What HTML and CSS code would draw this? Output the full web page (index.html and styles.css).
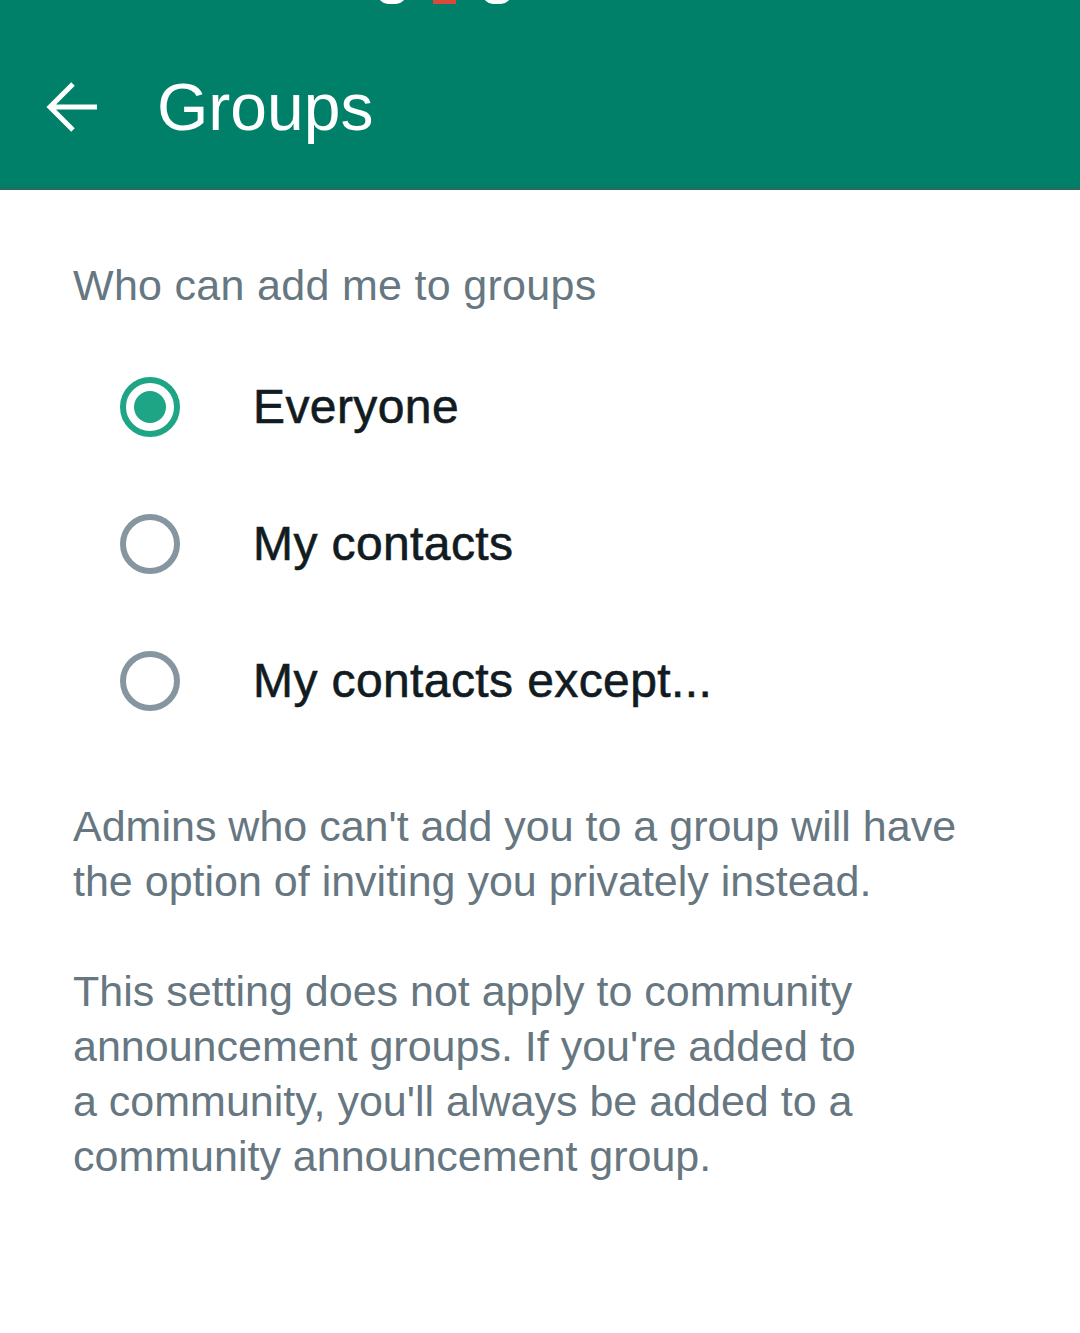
FILE: index.html
```html
<!DOCTYPE html>
<html lang="en">
<head>
    <meta charset="UTF-8">
    <meta name="viewport" content="width=device-width, initial-scale=1.0">
    <title>Groups</title>
    <link rel="stylesheet" href="styles.css">
</head>
<body>
    <header class="app-bar">
        <div class="status-bits">
            <span class="bit"></span><span class="bit red"></span><span class="bit"></span>
        </div>
        <div class="bar-row">
            <button class="back" aria-label="Back">
                <svg width="56" height="56" viewBox="0 0 56 56"><path d="M52 28H6M28 5L5 28l23 23" fill="none" stroke="#fff" stroke-width="5"/></svg>
            </button>
            <h1>Groups</h1>
        </div>
    </header>

    <main class="content">
        <h2 class="section-title">Who can add me to groups</h2>

        <div class="options">
            <label class="option">
                <input type="radio" name="who" checked>
                <span class="radio"></span>
                <span class="option-label">Everyone</span>
            </label>
            <label class="option">
                <input type="radio" name="who">
                <span class="radio"></span>
                <span class="option-label">My contacts</span>
            </label>
            <label class="option">
                <input type="radio" name="who">
                <span class="radio"></span>
                <span class="option-label">My contacts except...</span>
            </label>
        </div>

        <p class="note">Admins who can't add you to a group will have<br>the option of inviting you privately instead.</p>
        <p class="note">This setting does not apply to community<br>announcement groups. If you're added to<br>a community, you'll always be added to a<br>community announcement group.</p>
    </main>
</body>
</html>
```

FILE: styles.css
```css
body { margin: 0; font-family: "Liberation Sans", Arial, sans-serif; background: #fff; }
.app-bar { background: #008069; height: 187px; border-bottom: 3px solid #1f6e5e; position: relative; }
.status-bits { position: absolute; top: -6px; left: 378px; display: flex; gap: 27px; }
.status-bits .bit { width: 28px; height: 10px; border-radius: 0 0 10px 10px; background: #fff; }
.status-bits .bit.red { width: 23px; background: #d84a3a; border-radius: 0; }
.bar-row { display: flex; align-items: center; height: 187px; padding-left: 45px; padding-top: 26px; box-sizing: border-box; }
.back { background: none; border: none; padding: 0; width: 56px; height: 56px; display: flex; align-items: center; }
.bar-row h1 { margin: 0 0 0 56px; color: #fff; font-weight: 400; font-size: 66px; }
.content { padding: 0 73px; }
.section-title { margin: 0; padding-top: 66px; font-size: 43px; font-weight: 400; color: #667781; line-height: 58px; letter-spacing: 0.3px; }
.options { margin-top: 24px; margin-bottom: 50px; }
.option { display: flex; align-items: center; height: 137px; padding-left: 47px; cursor: pointer; }
.option input { display: none; }
.radio { width: 48px; height: 48px; border: 6px solid #8696a0; border-radius: 50%; box-sizing: content-box; position: relative; }
.option input:checked + .radio { border-color: #1da586; }
.option input:checked + .radio::after { content: ""; position: absolute; left: 8px; top: 8px; width: 32px; height: 32px; border-radius: 50%; background: #1da586; }
.option-label { margin-left: 73px; font-size: 48px; color: #111b21; -webkit-text-stroke: 0.6px #111b21; letter-spacing: 0.4px; }
.note { margin: 0 0 55px; font-size: 43px; line-height: 55px; color: #667781; }
```
